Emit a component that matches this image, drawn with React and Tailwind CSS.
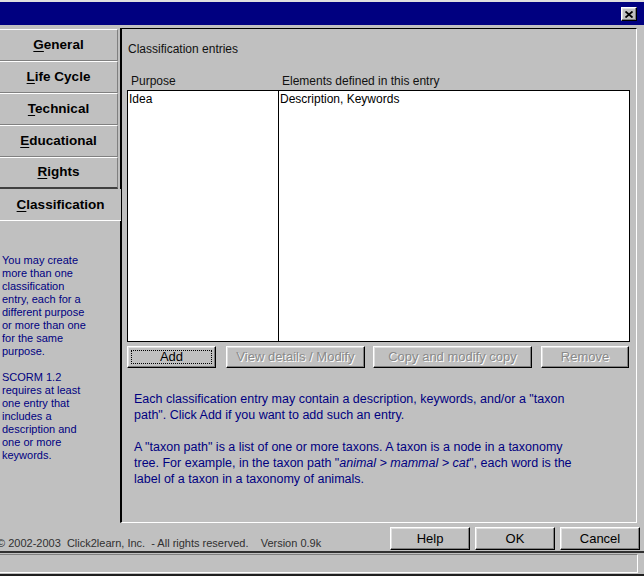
import React from "react";

const raised =
  "border border-t-white border-l-white border-b-black border-r-black shadow-[inset_-1px_-1px_0_#808080,inset_1px_1px_0_#dfdfdf] bg-[#c0c0c0]";

function Tab({ first, rest, selected, darkBottom }) {
  return (
    <div
      className={
        "h-[32px] flex items-center justify-center text-[13.5px] font-bold text-black " +
        (selected
          ? "w-[121px] border-b border-b-white border-t border-t-[#c0c0c0] relative z-10 bg-[#c0c0c0]"
          : "w-[118px] border-t border-t-white border-r border-r-[#808080] " +
            (darkBottom ? "border-b-2 border-b-[#404040]" : "border-b border-b-[#808080]"))
      }
    >
      <span>
        <span className="underline underline-offset-2">{first}</span>
        {rest}
      </span>
    </div>
  );
}

function Btn({ children, disabled, focus, w }) {
  return (
    <div className={"h-[22px] relative flex items-center justify-center text-[13px] " + raised + " " + w}>
      {focus && <div className="absolute inset-[3px] border border-dotted border-black" />}
      <span
        className={
          disabled ? "text-[#8a8a8a] [text-shadow:1px_1px_0_#ffffff]" : "text-black"
        }
      >
        {children}
      </span>
    </div>
  );
}

export default function App() {
  return (
    <div
      className="w-[644px] h-[576px] bg-[#c0c0c0] overflow-hidden flex flex-col"
      style={{ fontFamily: '"Liberation Sans", Arial, sans-serif' }}
    >
      {/* title bar */}
      <div className="h-[25px] border-t-2 border-t-[#dfdfdf] bg-[#000080] flex items-start justify-end pr-[7px] pt-[5px]">
        <div className={"w-[16px] h-[14px] flex items-center justify-center " + raised}>
          <svg width="8" height="7" viewBox="0 0 8 7">
            <path d="M0.5 0.5 L7.5 6.5 M7.5 0.5 L0.5 6.5" stroke="black" strokeWidth="1.8" />
          </svg>
        </div>
      </div>

      {/* main */}
      <div className="h-[498px] flex">
        <div className="w-[120px] flex flex-col pt-[4px]">
          <Tab first="G" rest="eneral" />
          <Tab first="L" rest="ife Cycle" />
          <Tab first="T" rest="echnical" />
          <Tab first="E" rest="ducational" />
          <Tab first="R" rest="ights" darkBottom />
          <Tab first="C" rest="lassification" selected />
          <div className="pt-[33px] pl-[2px] text-[11px] leading-[13px] text-[#000080]">
            You may create<br />
            more than one<br />
            classification<br />
            entry, each for a<br />
            different purpose<br />
            or more than one<br />
            for the same<br />
            purpose.<br />
            <br />
            SCORM 1.2<br />
            requires at least<br />
            one entry that<br />
            includes a<br />
            description and<br />
            one or more<br />
            keywords.
          </div>
        </div>

        <div className="mt-[3px] w-[517px] h-[495px] border-l-2 border-l-black border-t border-t-black border-b border-b-white border-r border-r-white flex flex-col">
          <div className="mt-[13px] pl-[6px] text-[12px] leading-[14px] text-[#111]">
            Classification entries
          </div>
          <div className="mt-[18px] flex text-[12px] leading-[14px] text-[#111]">
            <div className="w-[160px] pl-[9px]">Purpose</div>
            <div>Elements defined in this entry</div>
          </div>
          <div className="mt-[2px] ml-[5px] w-[503px] h-[252px] border border-black bg-white flex text-[12px] leading-[14px] text-black">
            <div className="w-[151px] border-r border-r-black pl-[1px] pt-[1px]">Idea</div>
            <div className="pl-[1px] pt-[1px]">Description, Keywords</div>
          </div>
          <div className="mt-[4px] ml-[5px] flex">
            <Btn focus w="w-[89px]">Add</Btn>
            <div className="w-[10px]" />
            <Btn disabled w="w-[139px]">View details / Modify</Btn>
            <div className="w-[8px]" />
            <Btn disabled w="w-[159px]">Copy and modify copy</Btn>
            <div className="w-[9px]" />
            <Btn disabled w="w-[88px]">Remove</Btn>
          </div>
          <div className="mt-[23px] pl-[12px] text-[12.5px] leading-[16px] text-[#000080]">
            <p>
              Each classification entry may contain a description, keywords, and/or a "taxon
              <br />
              path". Click Add if you want to add such an entry.
            </p>
            <p className="mt-[16px]">
              A "taxon path" is a list of one or more taxons. A taxon is a node in a taxonomy
              <br />
              tree. For example, in the taxon path "<i>animal &gt; mammal &gt; cat</i>", each word is the
              <br />
              label of a taxon in a taxonomy of animals.
            </p>
          </div>
        </div>
      </div>

      {/* footer */}
      <div className="h-[28px] flex items-start">
        <div className="w-[387px] -ml-[3px] pt-[14px] text-[11px] leading-[13px] text-[#303030] whitespace-pre">
          {"© 2002-2003  Click2learn, Inc.  - All rights reserved.    Version 0.9k"}
        </div>
        <div className="flex pt-[4px] ml-[6px]">
          <div className={"w-[80px] h-[23px] flex items-center justify-center text-[13px] text-black " + raised}>Help</div>
          <div className="w-[5px]" />
          <div className={"w-[80px] h-[23px] flex items-center justify-center text-[13px] text-black " + raised}>OK</div>
          <div className="w-[5px]" />
          <div className={"w-[80px] h-[23px] flex items-center justify-center text-[13px] text-black " + raised}>Cancel</div>
        </div>
      </div>

      {/* status bar */}
      <div className="h-[3px] border-t-2 border-t-[#303030]" />
      <div className="h-[19px] w-[638px] border-t border-t-[#808080] border-b border-b-white border-r border-r-white" />
      <div className="h-[3px] border-b-2 border-b-[#202020]" />
    </div>
  );
}
